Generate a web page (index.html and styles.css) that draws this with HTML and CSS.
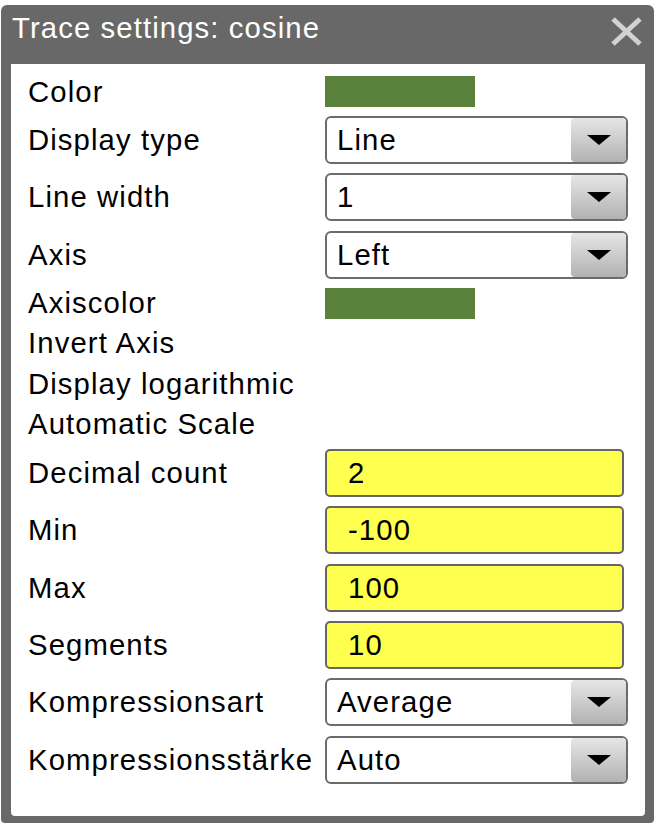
FILE: index.html
```html
<!DOCTYPE html>
<html>
<head>
<meta charset="utf-8">
<link rel="stylesheet" href="styles.css">
</head>
<body>
<div class="dialog">
  <div class="header">
    <span class="title">Trace settings: cosine</span>
    <svg class="close" width="31" height="29" viewBox="0 0 31 29"><path d="M2 2 L29 27 M29 2 L2 27" stroke="#d2d2d2" stroke-width="5" fill="none"/></svg>
  </div>
  <div class="body">
    <div class="row r-sw"><span class="label">Color</span><span class="swatch"></span></div>
    <div class="row r-ctl"><span class="label">Display type</span><div class="select"><span class="val">Line</span><span class="btn"><span class="tri"></span></span></div></div>
    <div class="row r-ctl"><span class="label">Line width</span><div class="select"><span class="val">1</span><span class="btn"><span class="tri"></span></span></div></div>
    <div class="row r-ctl"><span class="label">Axis</span><div class="select"><span class="val">Left</span><span class="btn"><span class="tri"></span></span></div></div>
    <div class="row r-sw"><span class="label">Axiscolor</span><span class="swatch"></span></div>
    <div class="row r-txt"><span class="label">Invert Axis</span></div>
    <div class="row r-txt"><span class="label">Display logarithmic</span></div>
    <div class="row r-txt"><span class="label">Automatic Scale</span></div>
    <div class="row r-ctl"><span class="label">Decimal count</span><div class="input">2</div></div>
    <div class="row r-ctl"><span class="label">Min</span><div class="input">-100</div></div>
    <div class="row r-ctl"><span class="label">Max</span><div class="input">100</div></div>
    <div class="row r-ctl"><span class="label">Segments</span><div class="input">10</div></div>
    <div class="row r-ctl"><span class="label">Kompressionsart</span><div class="select"><span class="val">Average</span><span class="btn"><span class="tri"></span></span></div></div>
    <div class="row r-ctl"><span class="label">Kompressionsstärke</span><div class="select"><span class="val">Auto</span><span class="btn"><span class="tri"></span></span></div></div>
  </div>
</div>
</body>
</html>
```

FILE: styles.css
```css
html, body {
  margin: 0;
  padding: 0;
  background: #ffffff;
}
body {
  font-family: "Liberation Sans", Arial, sans-serif;
  font-size: 29.3px;
  letter-spacing: 1.1px;
  color: #000;
}
.dialog {
  margin: 5px 0 0 1px;
  width: 653px;
  background: #686868;
  border-radius: 6px 6px 4px 4px;
  padding-bottom: 6.5px;
  display: flex;
  flex-direction: column;
}
.header {
  height: 59px;
  box-sizing: border-box;
  padding: 6.5px 12px 0 11px;
  display: flex;
  justify-content: space-between;
  align-items: flex-start;
}
.title {
  color: #ffffff;
  line-height: 32px;
  white-space: nowrap;
}
.close {
  margin-top: 5.5px;
  display: block;
}
.body {
  margin: 0 9px 0 10px;
  background: #ffffff;
  border-radius: 0 0 4px 4px;
  padding: 8px 17px 28px 17px;
}
.row {
  display: flex;
  align-items: center;
}
.r-sw { height: 39.5px; }
.r-txt { height: 40.5px; }
.r-ctl { height: 57.3px; }
.label {
  width: 297px;
  flex: none;
  white-space: nowrap;
  line-height: 32px;
}
.swatch {
  width: 150px;
  height: 31px;
  background: #5a823c;
}
.select {
  width: 303px;
  height: 48px;
  box-sizing: border-box;
  border: 2px solid #6b6b6b;
  border-radius: 6px;
  background: #fff;
  display: flex;
  align-items: stretch;
}
.select .val {
  flex: 1;
  padding-left: 10px;
  display: flex;
  align-items: center;
}
.btn {
  width: 55px;
  background: linear-gradient(#e6e6e6, #b2b2b2);
  border-radius: 4px;
  display: flex;
  align-items: center;
  justify-content: center;
}
.tri {
  width: 0;
  height: 0;
  border-left: 12.5px solid transparent;
  border-right: 12.5px solid transparent;
  border-top: 10px solid #000;
}
.input {
  width: 299px;
  height: 48px;
  box-sizing: border-box;
  border: 2px solid #666;
  border-radius: 5px;
  background: #ffff50;
  padding-left: 21px;
  display: flex;
  align-items: center;
}
```
